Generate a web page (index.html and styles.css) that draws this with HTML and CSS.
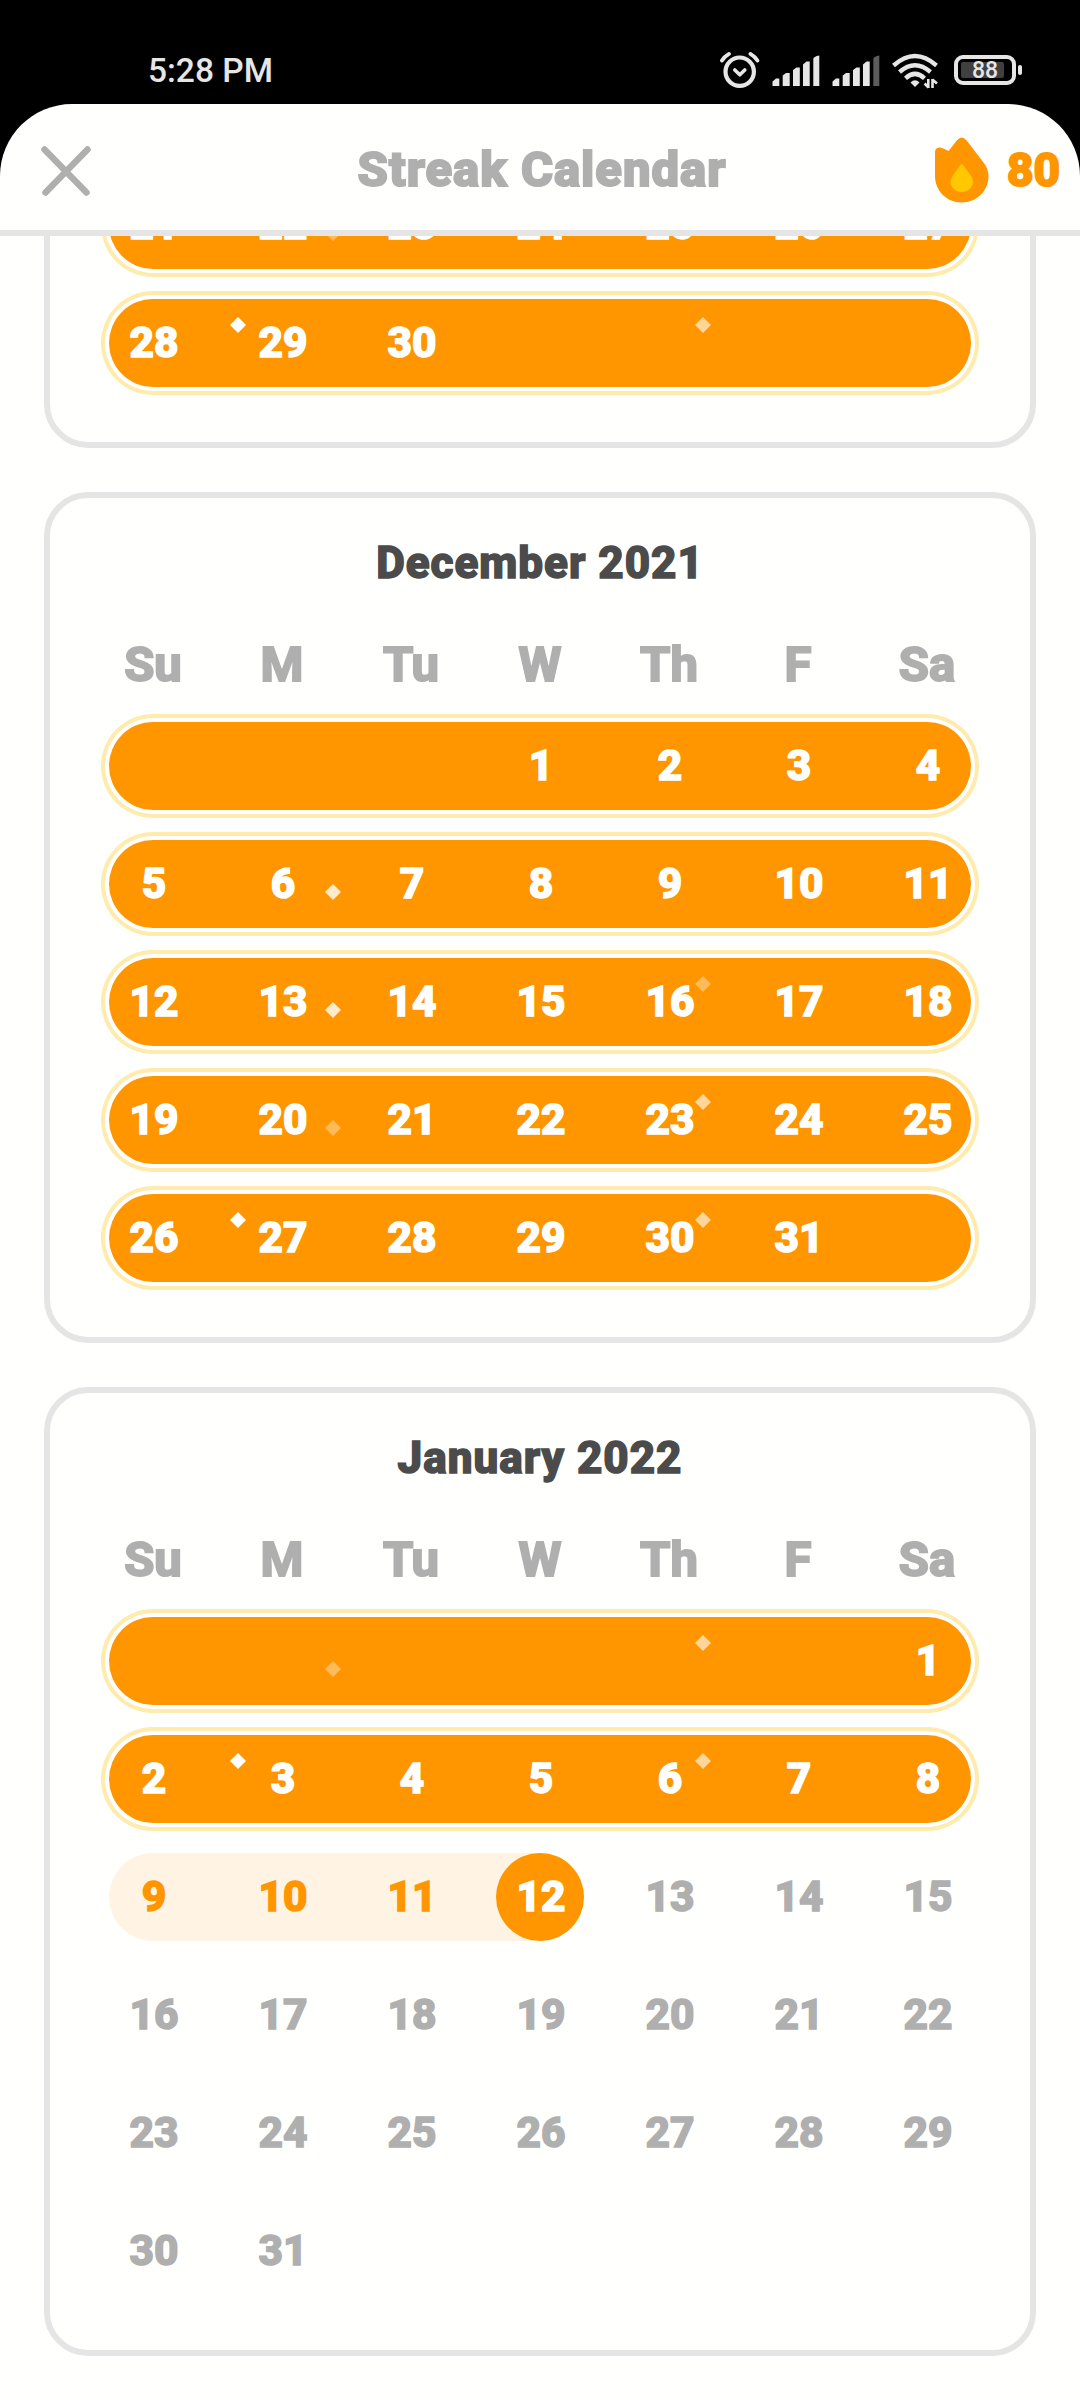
FILE: index.html
```html
<!DOCTYPE html>
<html lang="en">
<head>
    <meta charset="UTF-8">
    <meta name="viewport" content="width=device-width, initial-scale=1.0">
    <title>Streak Calendar</title>
    <link rel="stylesheet" href="styles.css">
</head>
<body>
<div class="status-bar">
    <span class="clock">5:28 PM</span>
    <div class="status-icons">
        <svg class="alarm" width="40" height="38" viewBox="0 0 40 38" fill="none" stroke="#e6e6e6" stroke-linecap="round">
            <circle cx="19.7" cy="20.7" r="14.2" stroke-width="4.2"/>
            <path d="M14.8 19l5 4.8 5-4.8" stroke-width="3.6" stroke-linejoin="round"/>
            <path d="M2 9.6Q4.500 5.500 9 2.900M37.400 9.600Q34.900 5.500 30.400 2.900" stroke-width="3.8"/>
        </svg>
        <svg class="signal" width="48" height="32" viewBox="0 0 48 32" fill="#e6e6e6">
            <path d="M0.500 31V26.500L4 23.500H7.300V31zM10.700 31V20.500L14 18H17.700V31zM21 31V15L24.500 12.500H27.800V31zM31 31V9.500L34.500 6.500H37.700V31zM41.300 31V4Q41.500 1.500 47.300 0.500V31z"/>
        </svg>
        <svg class="signal" width="48" height="32" viewBox="0 0 48 32" fill="#e6e6e6">
            <path d="M0.500 31V26.500L4 23.500H7.300V31zM10.700 31V20.500L14 18H17.700V31zM21 31V15L24.500 12.500H27.800V31zM31 31V9.500L34.500 6.500H37.700V31z"/>
            <path d="M41.300 31V4Q41.500 1.500 47.300 0.500V31z" fill="#5c5c5c"/>
        </svg>
        <svg class="wifi" width="48" height="36" viewBox="0 0 48 36" fill="none" stroke="#e6e6e6" stroke-width="4.4">
            <path d="M1.500 12.500Q23 -6.500 44.500 12.500"/>
            <path d="M7.500 19Q23 5.500 38.500 19"/>
            <path d="M13.500 25.300Q23 16.500 32.500 25.300"/>
            <path d="M18.500 29.500Q23 25 27.500 29.500L23 34z" fill="#e6e6e6" stroke="none"/>
            <path d="M36.300 26V35M36.500 34.500L32.600 30.500M40.500 35V26M40.300 26.500L45 30.500" stroke-width="2.600"/>
        </svg>
        <div class="battery"><span>88</span></div>
    </div>
</div>

<div class="app">
    <header class="header">
        <svg class="close" width="50" height="50" viewBox="0 0 50 50" stroke="#afafaf" stroke-width="6.500" stroke-linecap="round">
            <path d="M3.500 3.500L45.500 46.500M46.500 3.500L4.500 46.500"/>
        </svg>
        <h1>Streak Calendar</h1>
        <div class="streak">
            <svg width="54" height="66" viewBox="0 0 54 66">
                <path d="M0 15Q0 11 4 10.500Q7 10.300 13.500 14L22 3.200Q26.700 -2.200 31.500 3.200L48.500 25.500C52 30 53.500 34 53.500 39C53.500 54 41.500 65.500 26.700 65.500C12 65.500 0 54 0 39z" fill="#ff9600"/>
                <path d="M25 28.500Q26.700 26 28.500 28.500L35 37.500Q38 41.500 38 44.500C38 50.700 33 55 26.700 55S15.500 50.700 15.500 44.500Q15.500 41.500 18.500 37.500z" fill="#ffc800"/>
            </svg>
            <span>80</span>
        </div>
    </header>

    <main class="months">
        <section class="month month-cut">
            <div class="week perfect">
                <span>21</span><span>22</span><span>23</span><span>24</span><span>25</span><span>26</span><span>27</span>
                <i class="spark low faint"></i>
            </div>
            <div class="week perfect">
                <span>28</span><span>29</span><span>30</span><span></span><span></span><span></span><span></span>
                <i class="spark left"></i><i class="spark right soft"></i>
            </div>
        </section>

        <section class="month">
            <h2>December 2021</h2>
            <div class="weekdays">
                <span>Su</span><span>M</span><span>Tu</span><span>W</span><span>Th</span><span>F</span><span>Sa</span>
            </div>
            <div class="week perfect">
                <span></span><span></span><span></span><span>1</span><span>2</span><span>3</span><span>4</span>
            </div>
            <div class="week perfect">
                <span>5</span><span>6</span><span>7</span><span>8</span><span>9</span><span>10</span><span>11</span>
                <i class="spark low bright"></i>
            </div>
            <div class="week perfect">
                <span>12</span><span>13</span><span>14</span><span>15</span><span>16</span><span>17</span><span>18</span>
                <i class="spark low bright"></i><i class="spark right faint"></i>
            </div>
            <div class="week perfect">
                <span>19</span><span>20</span><span>21</span><span>22</span><span>23</span><span>24</span><span>25</span>
                <i class="spark low faint"></i><i class="spark right soft"></i>
            </div>
            <div class="week perfect">
                <span>26</span><span>27</span><span>28</span><span>29</span><span>30</span><span>31</span><span></span>
                <i class="spark left"></i><i class="spark right soft"></i>
            </div>
        </section>

        <section class="month">
            <h2>January 2022</h2>
            <div class="weekdays">
                <span>Su</span><span>M</span><span>Tu</span><span>W</span><span>Th</span><span>F</span><span>Sa</span>
            </div>
            <div class="week perfect">
                <span></span><span></span><span></span><span></span><span></span><span></span><span>1</span>
                <i class="spark low faint"></i><i class="spark right soft"></i>
            </div>
            <div class="week perfect">
                <span>2</span><span>3</span><span>4</span><span>5</span><span>6</span><span>7</span><span>8</span>
                <i class="spark left"></i><i class="spark right soft"></i>
            </div>
            <div class="week">
                <div class="current">
                    <span>9</span><span>10</span><span>11</span><span class="today">12</span>
                </div>
                <span>13</span><span>14</span><span>15</span>
            </div>
            <div class="week">
                <span>16</span><span>17</span><span>18</span><span>19</span><span>20</span><span>21</span><span>22</span>
            </div>
            <div class="week">
                <span>23</span><span>24</span><span>25</span><span>26</span><span>27</span><span>28</span><span>29</span>
            </div>
            <div class="week">
                <span>30</span><span>31</span><span></span><span></span><span></span><span></span><span></span>
            </div>
        </section>
    </main>
</div>
</body>
</html>
```
FILE: styles.css
```css
* {
    box-sizing: border-box;
}

body {
    margin: 0;
    height: 2400px;
    background-color: #000000;
    font-family: Roboto, "Liberation Sans", sans-serif;
    display: flex;
    flex-direction: column;
    overflow: hidden;
}

/* Status bar */
.status-bar {
    height: 104px;
    padding: 38px 58px 0 148px;
    display: flex;
    justify-content: space-between;
    color: #e6e6e6;
}

.clock {
    font-size: 33.5px;
    font-weight: 500;
    line-height: 66px;
    height: 66px;
}

.status-icons {
    display: flex;
    align-items: flex-start;
    padding-top: 13px;
}

.signal {
    margin: 4px 0 0 12px;
}

.wifi {
    margin: 2px 0 0 12px;
}

.battery {
    position: relative;
    width: 62px;
    height: 30px;
    margin: 4px 6px 0 14px;
    padding: 3px;
    border: 4px solid #e6e6e6;
    border-radius: 9px;
}

.battery span {
    display: block;
    width: 43px;
    height: 16px;
    border-radius: 2px;
    background-color: #404040;
    font-size: 23px;
    font-weight: 500;
    line-height: 17px;
    padding-left: 11px;
}

.battery::after {
    content: "";
    position: absolute;
    left: 60px;
    top: 6px;
    width: 4px;
    height: 10px;
    border-radius: 2px;
    background-color: #e6e6e6;
}

/* App header */
.app {
    flex: 1;
    min-height: 0;
    display: flex;
    flex-direction: column;
    background-color: #fffffd;
    border-radius: 72px 72px 0 0;
    overflow: hidden;
}

.header {
    height: 132px;
    flex-shrink: 0;
    padding: 0 20px 0 41px;
    border-bottom: 6px solid #e5e5e5;
    display: grid;
    grid-template-columns: 1fr auto 1fr;
    align-items: center;
}

.close {
    margin-top: 7px;
}

.header h1 {
    margin: 4px 0 0 -17px;
    color: #afafaf;
    font-size: 49px;
    font-weight: 800;
    letter-spacing: 1px;
    -webkit-text-stroke: 2px #afafaf;
}

.streak {
    display: flex;
    justify-content: flex-end;
    align-items: center;
    gap: 18px;
    margin-top: 5px;
    color: #ff9600;
    font-size: 46px;
    font-weight: 800;
    -webkit-text-stroke: 2px #ff9600;
}

/* Month cards */
.months {
    flex: 1;
    min-height: 0;
    padding: 0 44px 44px;
    display: flex;
    flex-direction: column;
    justify-content: flex-end;
    gap: 44px;
    overflow: hidden;
}

.month {
    flex-shrink: 0;
    padding: 41px 59px 55px;
    border: 6px solid #e5e5e5;
    border-radius: 44px;
}

.month-cut {
    padding-top: 0;
}

.month h2 {
    margin: 0 0 54px;
    color: #4b4b4b;
    font-size: 44px;
    font-weight: 800;
    letter-spacing: 1px;
    line-height: 48px;
    text-align: center;
    -webkit-text-stroke: 1.5px #4b4b4b;
}

.weekdays,
.week {
    display: flex;
    justify-content: space-between;
    color: #afafaf;
    text-align: center;
}

.weekdays {
    margin-bottom: 33px;
    font-size: 49px;
    font-weight: 700;
    line-height: 48px;
    -webkit-text-stroke: 2px #afafaf;
}

.weekdays span,
.week span {
    width: 88px;
}

.week {
    position: relative;
    height: 88px;
    border-radius: 44px;
    font-size: 42.5px;
    font-weight: 800;
    line-height: 88px;
    text-indent: 2px;
    -webkit-text-stroke: 1.5px currentColor;
}

.week + .week {
    margin-top: 30px;
}

.perfect {
    background-color: #ff9600;
    color: #ffffff;
    box-shadow: 0 0 0 4px #ffffff, 0 0 0 8px #ffebab;
}

.current {
    width: 475px;
    display: flex;
    justify-content: space-between;
    border-radius: 44px;
    background-color: #fff4e4;
    color: #ff9600;
}

.today {
    border-radius: 50%;
    background-color: #ff9600;
    color: #ffffff;
}

/* Small diamonds on top of the perfect weeks */
.spark {
    position: absolute;
    top: 18px;
    width: 16px;
    height: 16px;
    background-color: #ffffff;
    clip-path: polygon(50% 0, 100% 50%, 50% 100%, 0 50%);
}

.left {
    left: 121px;
}

.right {
    left: 586px;
}

.low {
    left: 216px;
    top: 44px;
}

.bright {
    opacity: 0.8;
}

.soft {
    opacity: 0.6;
}

.faint {
    opacity: 0.35;
}
```
